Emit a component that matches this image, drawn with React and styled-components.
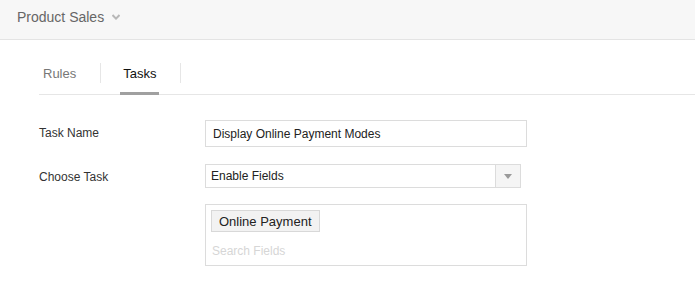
import React from 'react';
import styled, { createGlobalStyle } from 'styled-components';

const GlobalStyle = createGlobalStyle`
  html, body {
    margin: 0;
    padding: 0;
    background: #fff;
  }
  body {
    font-family: "Liberation Sans", Arial, sans-serif;
    color: #333;
  }
`;

const Header = styled.header`
  display: flex;
  align-items: center;
  height: 39px;
  padding-left: 17px;
  background: #f7f7f7;
  border-bottom: 1px solid #e4e4e4;
`;

const Title = styled.div`
  display: flex;
  align-items: center;
  gap: 8px;
  font-size: 14px;
  color: #666;
  margin-top: -6px;
`;

const TabBar = styled.nav`
  display: flex;
  align-items: flex-start;
  margin-left: 39px;
  padding-left: 1px;
  border-bottom: 1px solid #e6e6e6;
`;

const Tab = styled.div`
  padding: 23px 3px 8px;
  line-height: 21px;
  font-size: 13px;
  color: ${p => (p.$active ? '#111' : '#777')};
  border-bottom: 3px solid ${p => (p.$active ? '#a0a0a0' : 'transparent')};
  margin-bottom: -1px;
`;

const Divider = styled.span`
  width: 1px;
  height: 20px;
  margin: 23px 19px 0 21px;
  background: #e6e6e6;
`;

const Form = styled.div`
  display: grid;
  grid-template-columns: 166px 1fr;
  row-gap: 17px;
  align-items: center;
  padding: 25px 0 0 39px;
`;

const Label = styled.label`
  font-size: 12px;
  color: #333;
  margin-top: ${p => p.$shift || 0}px;
`;

const TextInput = styled.div`
  box-sizing: border-box;
  width: 322px;
  height: 27px;
  padding-left: 7px;
  display: flex;
  align-items: center;
  border: 1px solid #dcdcdc;
  font-size: 12px;
  color: #222;
`;

const Select = styled.div`
  box-sizing: border-box;
  width: 316px;
  height: 24px;
  display: flex;
  border: 1px solid #dcdcdc;
  font-size: 12px;
  color: #222;
`;

const SelectValue = styled.div`
  flex: 1;
  display: flex;
  align-items: center;
  padding-left: 5px;
`;

const SelectArrow = styled.div`
  width: 24px;
  display: flex;
  align-items: center;
  justify-content: center;
  background: #f5f5f5;
  border-left: 1px solid #dcdcdc;

  &::after {
    content: '';
    border-left: 4px solid transparent;
    border-right: 4px solid transparent;
    border-top: 5px solid #9a9a9a;
  }
`;

const MultiBox = styled.div`
  grid-column: 2;
  box-sizing: border-box;
  width: 322px;
  height: 62px;
  padding: 5px;
  border: 1px solid #dcdcdc;
  margin-top: -1px;
`;

const TagItem = styled.span`
  display: inline-flex;
  align-items: center;
  box-sizing: border-box;
  height: 22px;
  padding: 0 7px;
  background: #f2f2f2;
  border: 1px solid #d8d8d8;
  font-size: 13px;
  color: #222;
`;

const Placeholder = styled.div`
  margin-top: 11px;
  padding-left: 1px;
  line-height: 16px;
  font-size: 12px;
  color: #d6d6d6;
`;

const Chevron = () => (
  <svg width="8" height="6" viewBox="0 0 8 6">
    <path d="M0.5 1 L4 4.6 L7.5 1" fill="none" stroke="#b8b8b8" strokeWidth="2" />
  </svg>
);

export default function App() {
  return (
    <>
      <GlobalStyle />
      <Header>
        <Title>
          Product Sales
          <Chevron />
        </Title>
      </Header>
      <TabBar>
        <Tab>Rules</Tab>
        <Divider />
        <Tab $active>Tasks</Tab>
        <Divider />
      </TabBar>
      <Form>
        <Label $shift={-1}>Task Name</Label>
        <TextInput>Display Online Payment Modes</TextInput>
        <Label $shift={2}>Choose Task</Label>
        <Select>
          <SelectValue>Enable Fields</SelectValue>
          <SelectArrow />
        </Select>
        <MultiBox>
          <TagItem>Online Payment</TagItem>
          <Placeholder>Search Fields</Placeholder>
        </MultiBox>
      </Form>
    </>
  );
}
